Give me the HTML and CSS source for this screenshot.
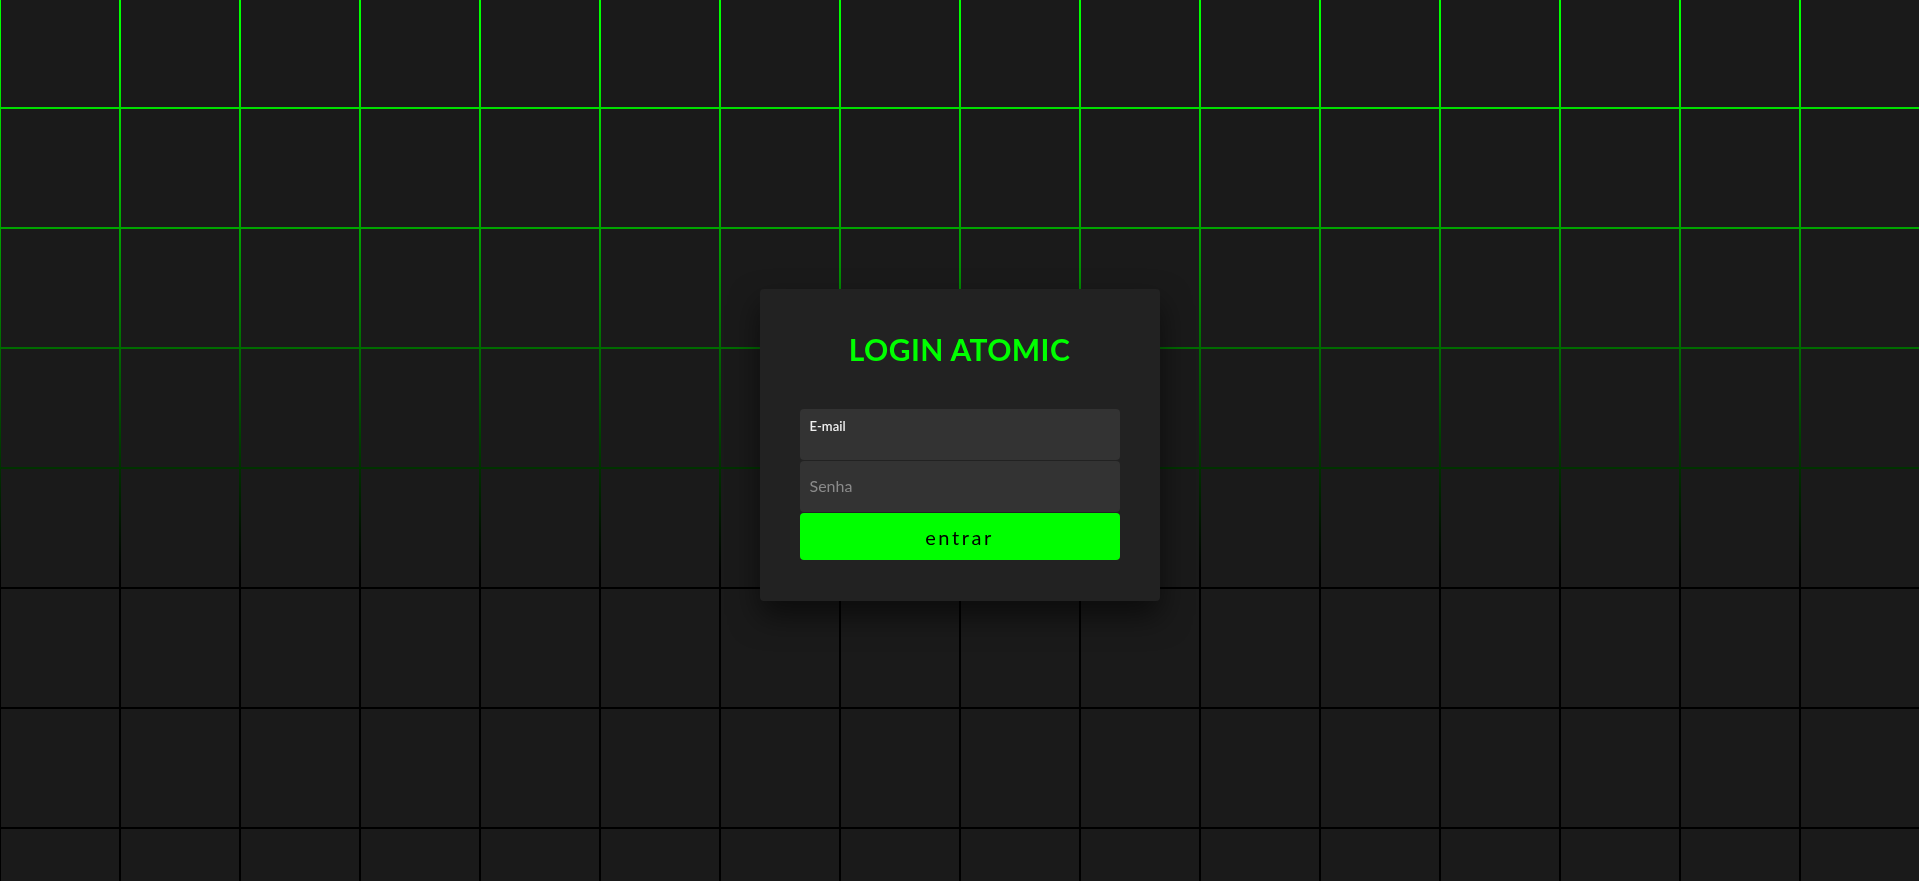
FILE: index.html
```html
<!DOCTYPE html>
<html lang="pt-BR">
<head>
<meta charset="utf-8">
<title>Login Atomic</title>
<link rel="stylesheet" href="styles.css">
</head>
<body>
<div class="grid-glow"></div>
<main class="stage">
  <form class="card">
    <h1 class="title">LOGIN ATOMIC</h1>
    <div class="fields">
      <label class="field field-email">
        <span class="field-label">E-mail</span>
        <input class="field-input" type="email">
      </label>
      <label class="field">
        <input class="field-input field-input-plain" type="password" placeholder="Senha">
      </label>
      <button class="submit" type="button">entrar</button>
    </div>
  </form>
</main>
</body>
</html>
```

FILE: styles.css
```css
html, body {
  margin: 0;
  height: 100%;
}

body {
  background-color: #1a1a1a;
  background-image:
    linear-gradient(to right, #000 0, #000 2px, transparent 2px),
    linear-gradient(to bottom, #000 0, #000 2px, transparent 2px);
  background-size: 120px 120px;
  background-position: -1px 0, 0 -13px;
  font-family: "Lato", "Open Sans", sans-serif;
  overflow: hidden;
  position: relative;
}

.grid-glow {
  position: fixed;
  inset: 0;
  background-image:
    linear-gradient(to right, #00ff00 0, #00ff00 2px, transparent 2px),
    linear-gradient(to bottom, #00ff00 0, #00ff00 2px, transparent 2px);
  background-size: 120px 120px;
  background-position: -1px 0, 0 -13px;
  -webkit-mask-image: linear-gradient(to bottom, #000 0px, #000 40px, transparent 570px);
  mask-image: linear-gradient(to bottom, #000 0px, #000 40px, transparent 570px);
  pointer-events: none;
}

.stage {
  position: relative;
  height: 100%;
  box-sizing: border-box;
  padding-top: 9px;
  display: flex;
  align-items: center;
  justify-content: center;
}

.card {
  width: 400px;
  box-sizing: border-box;
  padding: 40px 40px 41px;
  background: #222222;
  border-radius: 4px;
  box-shadow: 0 15px 30px rgba(0, 0, 0, 0.55);
}

.title {
  margin: 0 0 40px;
  height: 40px;
  line-height: 40px;
  text-align: center;
  color: #00ff00;
  font-size: 30px;
  font-weight: 700;
  letter-spacing: 0.4px;
}

.fields {
  display: flex;
  flex-direction: column;
  gap: 1px;
}

.field {
  position: relative;
  display: block;
  height: 51px;
  background: #333333;
  border-radius: 4px;
}

.field-label {
  position: absolute;
  left: 10px;
  top: 9px;
  font-size: 13px;
  font-weight: 600;
  color: #eeeeee;
}

.field-input {
  box-sizing: border-box;
  width: 100%;
  height: 100%;
  padding: 14px 10px 0;
  border: none;
  outline: none;
  background: transparent;
  color: #ffffff;
  font-family: inherit;
  font-size: 16px;
}

.field-input-plain {
  padding: 0 10px 2px;
}

.field-input::placeholder {
  color: #8a8a8a;
}

.submit {
  height: 47px;
  border: none;
  border-radius: 4px;
  background: #00ff00;
  color: #000000;
  font-family: inherit;
  font-size: 20px;
  letter-spacing: 2.6px;
  cursor: pointer;
}
```
